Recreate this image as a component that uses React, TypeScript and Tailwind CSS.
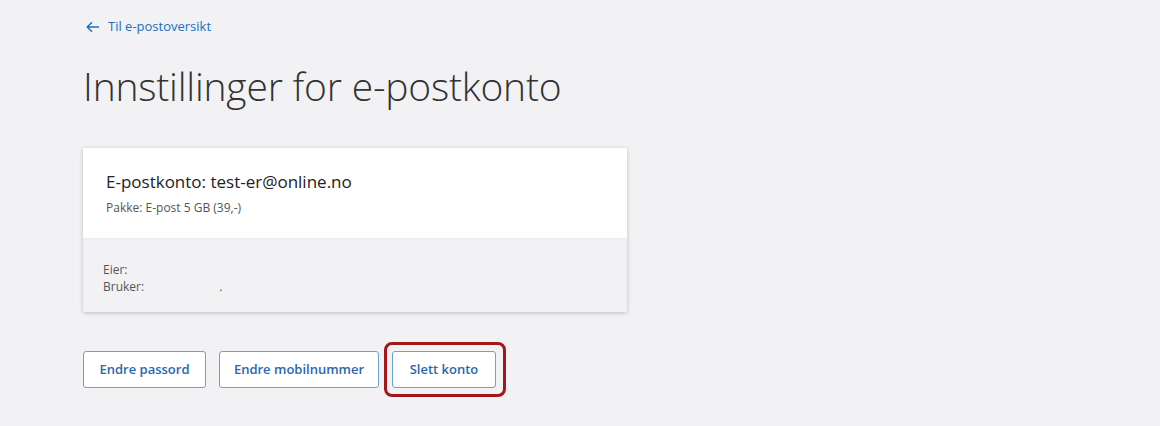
import React from "react";

export default function App() {
  return (
    <div className="w-[1160px] h-[426px] bg-[#f2f2f5] overflow-hidden" style={{ fontFamily: '"Open Sans", "Noto Sans", sans-serif' }}>
      <div className="pl-[83px] pt-[18px]">
        <a className="flex items-center gap-[8px] text-[13px] text-[#1a6fbf] h-[18px]">
          <svg width="14" height="12" viewBox="0 0 14 12" fill="none" stroke="#1a6fbf" strokeWidth="1.4" className="ml-[3px]">
            <path d="M13 6H1.5M6 1.2L1.2 6l4.8 4.8" />
          </svg>
          <span>Til e-postoversikt</span>
        </a>
        <h1 className="mt-[26px] text-[39px] leading-[48px] font-light text-[#333] tracking-[-0.2px]">Innstillinger for e-postkonto</h1>
        <div className="mt-[38px] w-[544px] bg-white rounded-[2px] shadow-[0_1px_4px_rgba(0,0,0,0.22)] overflow-hidden">
          <div className="h-[90px] px-[23px] pt-[22px]">
            <div className="text-[17px] leading-[24px] text-[#222]">E-postkonto: test-er@online.no</div>
            <div className="mt-[6px] text-[12px] leading-[16px] text-[#555]">Pakke: E-post 5 GB (39,-)</div>
          </div>
          <div className="h-[74px] bg-[#f2f2f5] px-[20px] pt-[23px] text-[12px] leading-[17px] text-[#555] shadow-[inset_0_1px_2px_rgba(0,0,0,0.04)]">
            <div>Eier:</div>
            <div className="flex">
              <span>Bruker:</span>
              <span className="ml-[75px]">.</span>
            </div>
          </div>
        </div>
        <div className="mt-[39px] flex items-center gap-[13px]">
          <button className="h-[37px] w-[123px] border-[1.5px] border-[#6aa3d8] rounded-[3px] bg-white text-[13px] font-semibold text-[#2a67ad]">Endre passord</button>
          <button className="h-[37px] w-[160px] border-[1.5px] border-[#6aa3d8] rounded-[3px] bg-white text-[13px] font-semibold text-[#2a67ad]">Endre mobilnummer</button>
          <div className="relative">
            <button className="h-[37px] w-[104px] border-[1.5px] border-[#6aa3d8] rounded-[3px] bg-white text-[13px] font-semibold text-[#2a67ad]">Slett konto</button>
            <div className="absolute left-[-8px] top-[-9px] w-[122px] h-[55px] border-[3px] border-[#a3161c] rounded-[8px] pointer-events-none" />
          </div>
        </div>
      </div>
    </div>
  );
}
